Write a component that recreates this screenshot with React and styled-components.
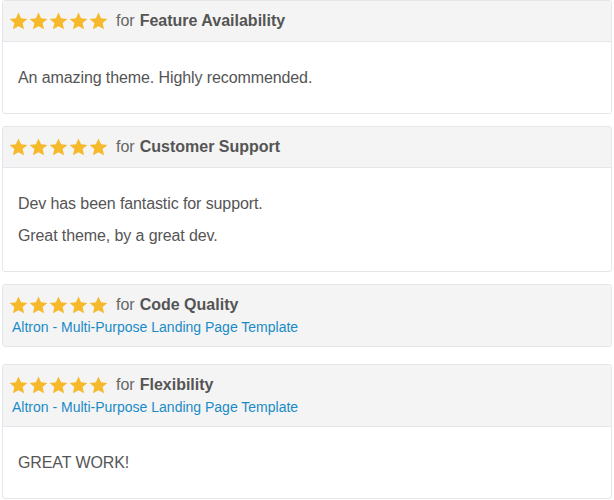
import React from "react";
import styled, { createGlobalStyle } from "styled-components";

const reviews = [
  {
    category: "Feature Availability",
    lines: ["An amazing theme. Highly recommended."],
  },
  {
    category: "Customer Support",
    lines: ["Dev has been fantastic for support.", "Great theme, by a great dev."],
  },
  {
    category: "Code Quality",
    item: "Altron - Multi-Purpose Landing Page Template",
    lines: [],
  },
  {
    category: "Flexibility",
    item: "Altron - Multi-Purpose Landing Page Template",
    lines: ["GREAT WORK!"],
  },
];

const GlobalStyle = createGlobalStyle`
  body {
    margin: 0;
    background: #fff;
    font-family: "Liberation Sans", Arial, sans-serif;
  }
`;

const List = styled.div`
  display: flex;
  flex-direction: column;
  padding: 0 2px;
  width: 610px;
`;

const Card = styled.div`
  border: 1px solid #e3e6ea;
  border-radius: 3px;
  background: #fff;
  margin-bottom: ${(p) => (p.$bare ? "17px" : "12px")};
  overflow: hidden;
`;

const Header = styled.div`
  background: #f4f4f4;
  padding: ${(p) => (p.$withItem ? "10px 6px 9px" : "10px 6px 10px")};
  border-bottom: ${(p) => (p.$bare ? "none" : "1px solid #e3e6ea")};
`;

const TitleRow = styled.div`
  display: flex;
  align-items: center;
  height: 20px;
`;

const Stars = styled.div`
  display: flex;
  gap: 1px;
  margin-right: 8px;
`;

const For = styled.span`
  font-size: 16px;
  color: #666;
`;

const Category = styled.strong`
  font-size: 16px;
  color: #555;
  margin-left: 5px;
`;

const ItemLink = styled.a`
  display: block;
  margin-top: 2px;
  margin-left: 3px;
  font-size: 14px;
  line-height: 20px;
  color: #1a8bc6;
  text-decoration: none;
`;

const Body = styled.div`
  padding: 27px 15px 13px;
`;

const Line = styled.p`
  margin: 0 0 14px;
  font-size: 16px;
  line-height: 18px;
  color: #555;
  letter-spacing: -0.1px;

  &:last-child {
    margin-bottom: 13px;
  }
`;

const Star = () => (
  <svg width="19" height="18" viewBox="0 0 24 23">
    <path
      d="M12 0.6l3.3 7.4 8.1 0.8-6.1 5.4 1.8 8L12 18.1l-7.1 4.1 1.8-8-6.1-5.4 8.1-0.8z"
      fill="#f6b92b"
    />
  </svg>
);

const Review = ({ category, item, lines }) => {
  const bare = lines.length === 0;
  return (
    <Card $bare={bare}>
      <Header $withItem={!!item} $bare={bare}>
        <TitleRow>
          <Stars>
            {[0, 1, 2, 3, 4].map((i) => (
              <Star key={i} />
            ))}
          </Stars>
          <For>for</For>
          <Category>{category}</Category>
        </TitleRow>
        {item && <ItemLink href="#">{item}</ItemLink>}
      </Header>
      {!bare && (
        <Body>
          {lines.map((l) => (
            <Line key={l}>{l}</Line>
          ))}
        </Body>
      )}
    </Card>
  );
};

const App = () => (
  <>
    <GlobalStyle />
    <List>
      {reviews.map((r) => (
        <Review key={r.category} {...r} />
      ))}
    </List>
  </>
);

export default App;
